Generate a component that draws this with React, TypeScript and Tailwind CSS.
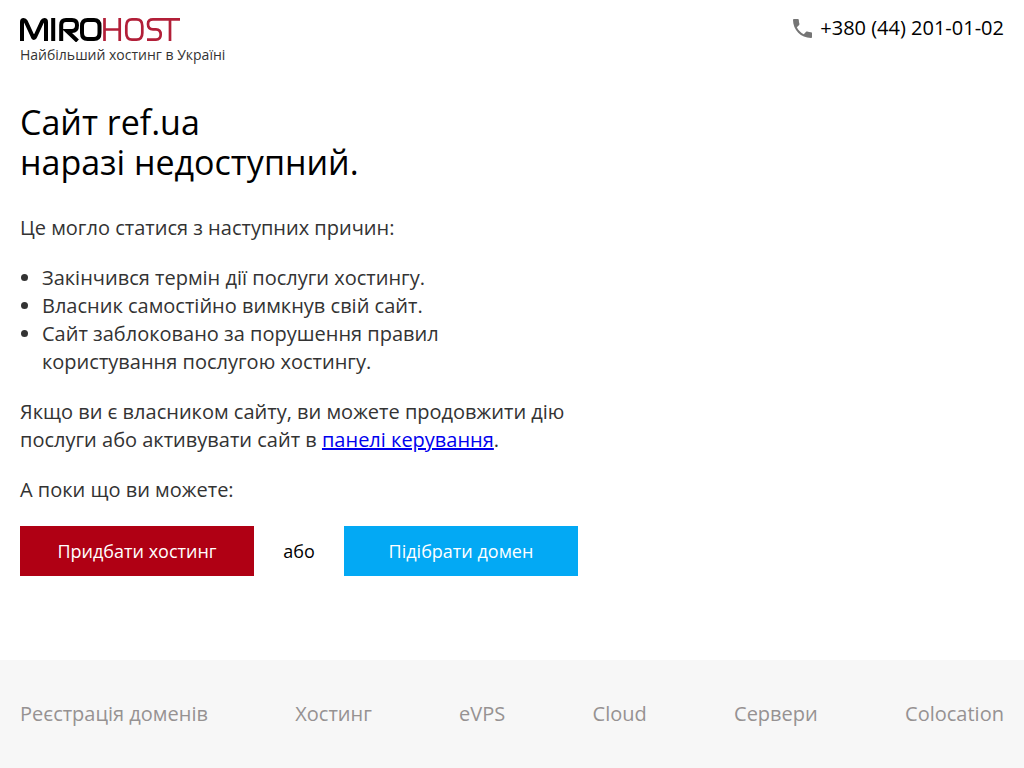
import React from "react";

const footerLinks = ["Реєстрація доменів", "Хостинг", "eVPS", "Cloud", "Сервери", "Colocation"];

function Logo() {
  return (
    <svg viewBox="0 0 160 24" className="block h-6 w-40" fill="none" role="img" aria-label="MiroHost">
      <g stroke="#000" strokeWidth="4">
        <path d="M2 23V4Q2 2 3.600 2Q5 2 6 3.800L12.500 18Q14 22 15.500 18L22 3.800Q23 2 24.300 2Q26 2 26 4V23" />
        <path d="M33.200 0V23" />
        <path d="M41.200 23V7Q41.200 2 46 2H52Q57 2 57 7.200Q57 13 52 13H47L57.500 23" />
        <path d="M67.500 2H74Q79.500 2 79.500 8V15Q79.500 21 74 21H67.500Q62 21 62 15V8Q62 2 67.500 2Z" />
      </g>
      <g stroke="#b21f38" strokeWidth="2.700">
        <path d="M84.500 0V23M99.700 0V23M84.500 11.500H99.700" />
        <path d="M112 1.400H116.500Q122.300 1.400 122.300 8V15Q122.300 21.600 116.500 21.600H112Q106.300 21.600 106.300 15V8Q106.300 1.400 112 1.400Z" />
        <path d="M140 1.400H133Q128 1.400 128 6Q128 11.300 133 11.300H136Q140.700 11.300 140.700 16.500Q140.700 21.600 136 21.600H127M140 1.400H160M150 1.400V23" />
      </g>
    </svg>
  );
}

export default function App() {
  return (
    <div className="flex min-h-screen flex-col bg-white font-['Open_Sans','Noto_Sans',sans-serif] text-black">
      <header className="flex items-start justify-between px-5 pt-[18px]">
        <a href="#home">
          <Logo />
          <span className="block pt-0.5 text-[14px] leading-[22px] text-[#333]">Найбільший хостинг в Україні</span>
        </a>
        <a href="tel:+380442010102" className="flex items-center gap-2 text-[20px] leading-5">
          <svg viewBox="3 3 18 18" className="size-[19px]" fill="#757575" aria-hidden="true">
            <path d="M6.62 10.79c1.44 2.83 3.76 5.14 6.59 6.59l2.2-2.2c.27-.27.67-.36 1.02-.24 1.12.37 2.33.57 3.57.57.55 0 1 .45 1 1V20c0 .55-.45 1-1 1-9.39 0-17-7.61-17-17 0-.55.45-1 1-1h3.5c.55 0 1 .45 1 1 0 1.25.2 2.45.57 3.57.11.35.03.74-.25 1.02l-2.2 2.2z" />
          </svg>
          +380 (44) 201-01-02
        </a>
      </header>
      <main className="flex-1 px-5 pt-9 pb-20">
        <h1 className="text-[34px] leading-10">
          Сайт ref.ua
          <br />
          наразі недоступний.
        </h1>
        <div className="flex max-w-[558px] flex-col gap-[22px] pt-8 text-[20px] leading-7 text-[#333]">
          <p>Це могло статися з наступних причин:</p>
          <ul className="max-w-[440px] list-disc pl-[22px]">
            <li>Закінчився термін дії послуги хостингу.</li>
            <li>Власник самостійно вимкнув свій сайт.</li>
            <li>Сайт заблоковано за порушення правил користування послугою хостингу.</li>
          </ul>
          <p>
            Якщо ви є власником сайту, ви можете продовжити дію послуги або активувати сайт в{" "}
            <a href="#panel" className="text-[#0000ee] underline">панелі керування</a>.
          </p>
          <p>А поки що ви можете:</p>
          <div className="flex items-center justify-between text-[18px] text-black">
            <a href="#hosting" className="flex h-[50px] w-[234px] items-center justify-center bg-[#b00014] text-white">Придбати хостинг</a>
            <span>або</span>
            <a href="#domain" className="flex h-[50px] w-[234px] items-center justify-center bg-[#03a9f4] text-white">Підібрати домен</a>
          </div>
        </div>
      </main>
      <footer className="bg-[#f7f7f7] px-5 py-10">
        <nav className="flex flex-wrap justify-between gap-x-6 text-[20px] leading-7 text-[#969292]">
          {footerLinks.map((name) => (
            <a key={name} href="#services">{name}</a>
          ))}
        </nav>
      </footer>
    </div>
  );
}
